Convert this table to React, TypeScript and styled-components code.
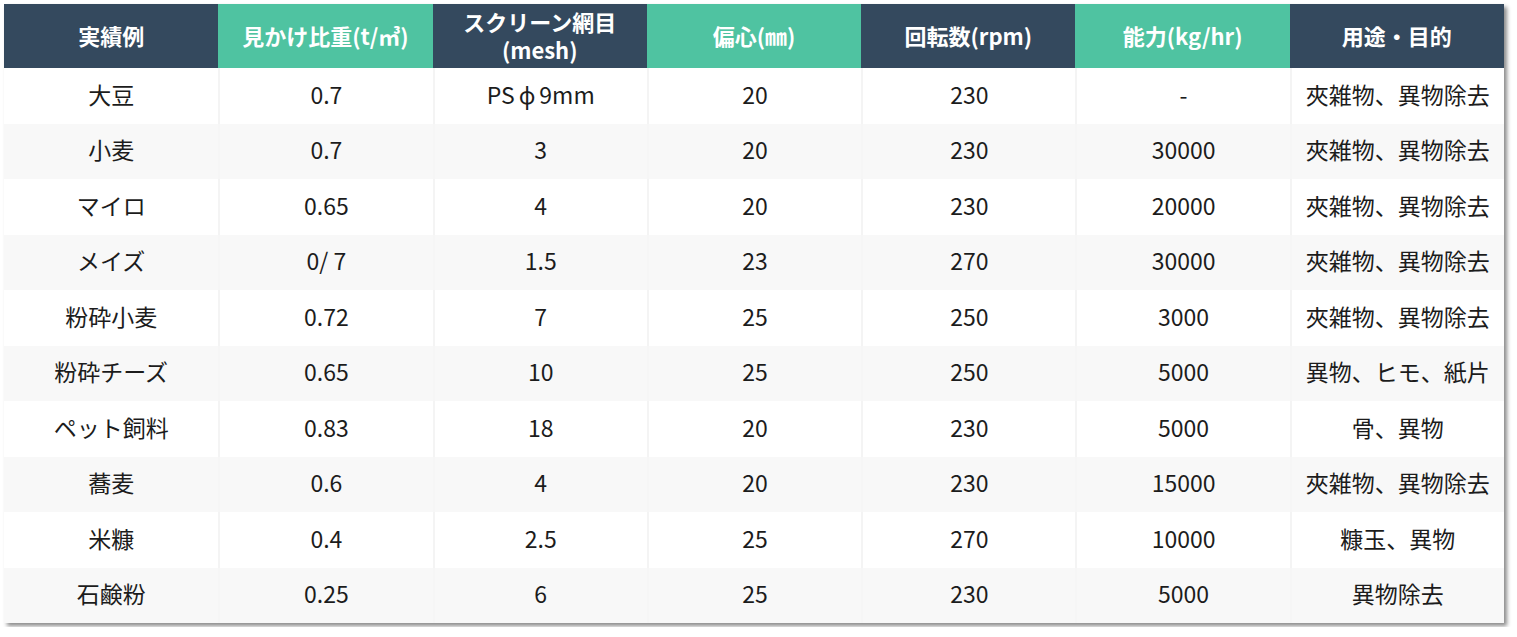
import React from 'react'
import styled, { createGlobalStyle } from 'styled-components'

const GlobalStyle = createGlobalStyle`
	html, body {
		margin: 0;
		padding: 0;
		background: #ffffff;
	}
	body {
		font-family: 'Noto Sans CJK JP', 'Noto Sans', sans-serif;
	}
`

const NAVY = '#34495e'
const GREEN = '#4fc3a1'

const Page = styled.div`
	padding: 4px;
`

const Table = styled.div`
	width: 1500px;
	display: grid;
	grid-template-columns: repeat(7, 1fr);
	grid-template-rows: 64px repeat(10, 55.5px);
	box-shadow: 3px 3px 4px rgba(0, 0, 0, 0.45);
	background: #ffffff;
`

const HeadCell = styled.div<{ $tone: 'navy' | 'green' }>`
	display: flex;
	align-items: center;
	justify-content: center;
	text-align: center;
	background: ${p => (p.$tone === 'navy' ? NAVY : GREEN)};
	color: #ffffff;
	font-weight: 700;
	font-size: 22px;
	line-height: 28px;
	padding-bottom: 2px;
`

const Cell = styled.div<{ $alt: boolean; $first: boolean }>`
	display: flex;
	align-items: center;
	justify-content: center;
	background: ${p => (p.$alt ? '#f8f8f8' : '#ffffff')};
	border-left: ${p => (p.$first ? 'none' : `2px solid ${p.$alt ? '#f6f6f6' : '#f4f4f4'}`)};
	color: #1c1c1c;
	font-size: 23px;
	line-height: 30px;
	padding-bottom: 4px;
	white-space: nowrap;
`

const Phi = styled.span`
	margin: 0 4px;
`

const headers: { label: React.ReactNode; tone: 'navy' | 'green' }[] = [
	{ label: '実績例', tone: 'navy' },
	{ label: '見かけ比重(t/㎥)', tone: 'green' },
	{
		label: (
			<>
				スクリーン網目
				<br />
				(mesh)
			</>
		),
		tone: 'navy',
	},
	{ label: '偏心(㎜)', tone: 'green' },
	{ label: '回転数(rpm)', tone: 'navy' },
	{ label: '能力(kg/hr)', tone: 'green' },
	{ label: '用途・目的', tone: 'navy' },
]

const rows: React.ReactNode[][] = [
	[
		'大豆',
		'0.7',
		<>
			PS<Phi>ϕ</Phi>9mm
		</>,
		'20',
		'230',
		'-',
		'夾雑物、異物除去',
	],
	['小麦', '0.7', '3', '20', '230', '30000', '夾雑物、異物除去'],
	['マイロ', '0.65', '4', '20', '230', '20000', '夾雑物、異物除去'],
	['メイズ', '0/ 7', '1.5', '23', '270', '30000', '夾雑物、異物除去'],
	['粉砕小麦', '0.72', '7', '25', '250', '3000', '夾雑物、異物除去'],
	['粉砕チーズ', '0.65', '10', '25', '250', '5000', '異物、ヒモ、紙片'],
	['ペット飼料', '0.83', '18', '20', '230', '5000', '骨、異物'],
	['蕎麦', '0.6', '4', '20', '230', '15000', '夾雑物、異物除去'],
	['米糠', '0.4', '2.5', '25', '270', '10000', '糠玉、異物'],
	['石鹸粉', '0.25', '6', '25', '230', '5000', '異物除去'],
]

export default function App() {
	return (
		<Page>
			<GlobalStyle />
			<Table>
				{headers.map((h, i) => (
					<HeadCell key={'h' + i} $tone={h.tone}>
						{h.label}
					</HeadCell>
				))}
				{rows.map((row, r) =>
					row.map((v, c) => (
						<Cell key={r + '-' + c} $alt={r % 2 === 1} $first={c === 0}>
							{v}
						</Cell>
					))
				)}
			</Table>
		</Page>
	)
}
